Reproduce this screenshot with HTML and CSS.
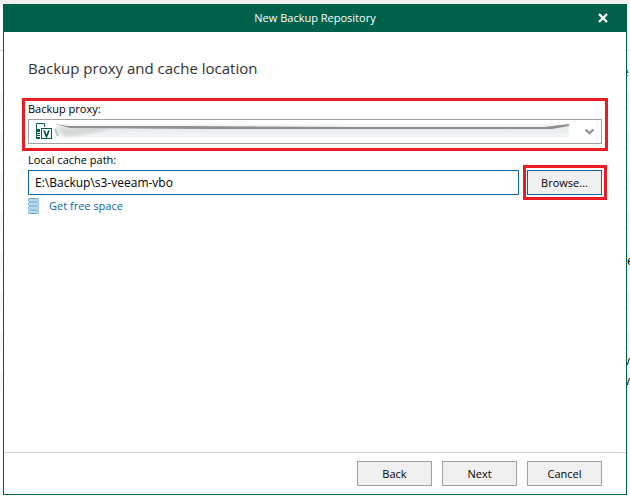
FILE: index.html
```html
<!DOCTYPE html>
<html lang="en">
<head>
    <meta charset="UTF-8">
    <title>New Backup Repository</title>
    <link rel="stylesheet" href="styles.css">
</head>
<body>
    <!-- Main window list behind the dialog -->
    <div class="backdrop" aria-hidden="true">
        <span class="peek peek-link">e</span>
        <span class="peek peek-one">e</span>
        <span class="peek peek-two">v</span>
        <span class="peek peek-three">v</span>
    </div>
    <div class="dialog">
        <div class="titlebar">
            <span class="title">New Backup Repository</span>
            <button class="close" type="button" aria-label="Close">
                <svg width="10" height="10" viewBox="0 0 10 10"><path d="M1 1L9 9M9 1L1 9" stroke="#fff" stroke-width="2.4"/></svg>
            </button>
        </div>
        <div class="content">
            <h1>Backup proxy and cache location</h1>
            <div class="highlight field-highlight">
                <label for="proxy">Backup proxy:</label>
                <div class="combo">
                    <select id="proxy" disabled><option></option></select>
                    <svg class="proxy-icon" width="17" height="17" viewBox="0 0 17 17">
                        <path d="M0.5 16V0.5H8.5V4" fill="none" stroke="#00614b"/>
                        <path d="M0 6H4V16H0Z" fill="#00614b"/>
                        <path d="M1 9.5H4M1 11.5H4M1 13.5H4" stroke="#fff"/>
                        <rect x="5.5" y="5.5" width="10" height="10" fill="#fff" stroke="#00614b"/>
                        <path d="M8 7.5L10.5 13.5L13 7.5" fill="none" stroke="#00614b" stroke-width="1.8"/>
                    </svg>
                    <svg class="smudge" viewBox="0 0 516 18" preserveAspectRatio="none">
                        <defs>
                            <linearGradient id="haze" x1="0" y1="0" x2="0" y2="1">
                                <stop offset="0" stop-color="#f8f8f8"/>
                                <stop offset="0.35" stop-color="#ececec"/>
                                <stop offset="0.5" stop-color="#eaeef0"/>
                                <stop offset="1" stop-color="#f8fafa"/>
                            </linearGradient>
                            <filter id="soft"><feGaussianBlur stdDeviation="0.6"/></filter>
                            <filter id="softer"><feGaussianBlur stdDeviation="1.6"/></filter>
                        </defs>
                        <path d="M2 3H515V17H5Q1 17 1 12Z" fill="url(#haze)"/>
                        <path d="M4 7H60L40 12L10 16Z" fill="#d3d8d7" filter="url(#softer)"/>
                        <path d="M1 3L14 5L130 5L300 6H490L515 3V5L498 8H150L16 7Z" fill="#8f8f8f" filter="url(#soft)"/>
                        <path d="M1 8L4 15" stroke="#b4cdc3" stroke-width="2" filter="url(#soft)"/>
                    </svg>
                    <svg class="arrow" width="9" height="6" viewBox="0 0 9 6"><path d="M0.5 0.5L4.5 4.2L8.5 0.5" fill="none" stroke="#999" stroke-width="2.4"/></svg>
                </div>
            </div>
            <label for="path">Local cache path:</label>
            <div class="path-row">
                <input id="path" type="text" value="E:\Backup\s3-veeam-vbo">
                <div class="highlight button-highlight">
                    <button class="btn btn-active" type="button">Browse...</button>
                </div>
            </div>
            <a class="free-space" href="#">
                <svg width="12" height="16" viewBox="0 0 12 16">
                    <g fill="#b9d9ed" stroke="#6aa5cb">
                        <rect x="0.5" y="0.5" width="10" height="3" rx="1"/>
                        <rect x="0.5" y="4.5" width="10" height="3" rx="1"/>
                        <rect x="0.5" y="8.5" width="10" height="3" rx="1"/>
                        <rect x="0.5" y="12.5" width="10" height="3" rx="1"/>
                    </g>
                    <path d="M1 4H10M1 8H10M1 12H10" stroke="#b9d9ed"/>
                </svg>
                <span>Get free space</span>
            </a>
        </div>
        <div class="footer">
            <button class="btn" type="button">Back</button>
            <button class="btn" type="button">Next</button>
            <button class="btn" type="button">Cancel</button>
        </div>
    </div>
</body>
</html>
```
FILE: styles.css
```css
* {
    box-sizing: border-box;
}
body {
    margin: 0;
    padding: 4px 3px 1px;
    min-height: 100vh;
    display: flex;
    font-family: "Open Sans", "Noto Sans", sans-serif;
    font-size: 11px;
    line-height: 16px;
    color: #000;
    background: #fff;
}
button, input, select {
    font: inherit;
    color: inherit;
}

/* Main window behind */
.backdrop {
    position: absolute;
    inset: 0;
    z-index: -1;
    overflow: hidden;
    background:
        linear-gradient(#f0f0f0, #f0f0f0) 0 0 / 100% 4px no-repeat,
        linear-gradient(#d4d4d4, #d4d4d4) 0 50px / 100% 1px no-repeat,
        linear-gradient(#fff, #fff) 0 391px / 100% 100% no-repeat,
        linear-gradient(#fff, #fff) 0 0 / 100% 91px no-repeat,
        repeating-linear-gradient(#fff 0 11px, #f7f7f7 11px 31px, #fff 31px 40px);
}
.peek {
    position: absolute;
    left: calc(100% - 3px);
    font-size: 12px;
}
.peek-link {
    top: 64px;
    left: calc(100% - 8px);
    color: #0b67ad;
}
.peek-two {
    top: 353px;
    left: calc(100% - 6px);
}
.peek-one {
    top: 253px;
}
.peek-three {
    top: 373px;
    left: calc(100% - 6px);
}

.dialog {
    flex: 1;
    display: flex;
    flex-direction: column;
    border: 1px solid #00614b;
    border-top: 0;
    background: #fff;
}
.titlebar {
    display: flex;
    align-items: center;
    height: 28px;
    padding: 0 13px;
    background: #00614b;
    color: #fff;
}
.title {
    flex: 1;
    padding-left: 20px;
    text-align: center;
}
.close {
    display: flex;
    align-items: center;
    justify-content: center;
    width: 20px;
    height: 20px;
    padding: 0;
    border: 0;
    background: none;
}

.content {
    flex: 1;
    padding: 24px 24px 0;
}
h1 {
    margin: 0 0 18px;
    font-size: 15px;
    font-weight: normal;
    line-height: 24px;
    color: #333;
}
label {
    display: block;
    margin-bottom: 2px;
}
.highlight {
    border: 3px solid #ed1c24;
}
.field-highlight {
    margin: 0 -6px 1px;
    padding: 0 3px 4px;
}
.combo {
    position: relative;
    height: 25px;
}
.combo select {
    display: block;
    width: 100%;
    height: 25px;
    appearance: none;
    border: 1px solid #a0a0a0;
    border-radius: 0;
    background: #fff;
    opacity: 1;
}
.proxy-icon,
.smudge,
.arrow {
    position: absolute;
    pointer-events: none;
}
.proxy-icon {
    top: 4px;
    left: 8px;
}
.smudge {
    top: 2px;
    left: 26px;
    width: calc(100% - 58px);
    height: 18px;
}
.arrow {
    top: 10px;
    right: 8px;
}
.path-row {
    display: flex;
    align-items: center;
    gap: 4px;
    height: 25px;
}
.path-row input {
    flex: 1;
    min-width: 0;
    height: 25px;
    padding: 0 6px;
    border: 1px solid #0b67ad;
    outline: none;
    font-size: 12px;
}
.button-highlight {
    margin-right: -5px;
    padding: 2px 2px 2px 1px;
}
.btn {
    display: block;
    width: 75px;
    height: 25px;
    padding: 0;
    border: 1px solid #a0a0a0;
    background: #f0f0f0;
}
.btn-active {
    border-color: #0b67ad;
}
.free-space {
    display: flex;
    align-items: center;
    gap: 9px;
    margin-top: 3px;
    color: #0b67ad;
    text-decoration: none;
}

.footer {
    display: flex;
    justify-content: flex-end;
    gap: 10px;
    padding: 8px 24px;
    border-top: 1px solid #d0d0d0;
}
```
